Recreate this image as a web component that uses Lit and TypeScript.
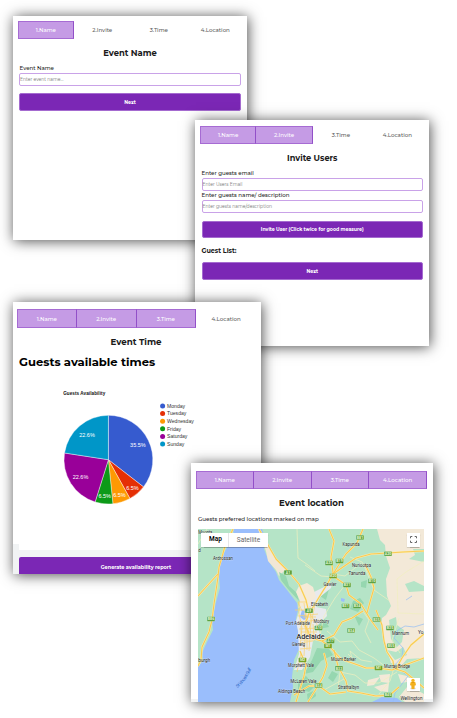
import { LitElement, html, css, svg } from "lit";
import { customElement, property } from "lit/decorators.js";
import { classMap } from "lit/directives/class-map.js";

const STEPS = ["1.Name", "2.Invite", "3.Time", "4.Location"];

@customElement("step-tabs")
class StepTabs extends LitElement {
  @property({ type: Number }) done = 1;

  static styles = css`
    :host { display: block; height: 100%; }
    .tabs { display: grid; grid-template-columns: repeat(4, 1fr); height: 100%; }
    .tab {
      display: flex; align-items: center; justify-content: center;
      font-size: 5.5px; font-weight: 500; color: #5c5c5c; box-sizing: border-box;
    }
    .on { background: #c59be5; color: #fff; border: 0.6px solid #a66bd3; border-right-color: #9250c8; }
    .on + .on { border-left: 0; }
  `;

  render() {
    return html`<div class="tabs">
      ${STEPS.map((s, i) => html`<div class=${classMap({ tab: true, on: i < this.done })}>${s}</div>`)}
    </div>`;
  }
}

const DAYS: [string, number, string, string][] = [
  ["Monday", 11, "#365bcf", "35.5%"],
  ["Tuesday", 2, "#e52f05", "6.5%"],
  ["Wednesday", 2, "#fe9902", "6.5%"],
  ["Friday", 2, "#0d9a18", "6.5%"],
  ["Saturday", 7, "#990099", "22.6%"],
  ["Sunday", 7, "#0096c8", "22.6%"],
];

@customElement("availability-chart")
class AvailabilityChart extends LitElement {
  static styles = css`
    :host { display: block; }
    svg { display: block; font-family: "Liberation Sans", Arial, sans-serif; }
    .title { font-size: 4.6px; font-weight: 700; fill: #111; }
    .pct { font-size: 5.5px; fill: #fff; text-anchor: middle; }
    .key { font-size: 5.1px; fill: #333; }
    .slice { stroke: #fff; stroke-width: 0.4; }
  `;

  render() {
    const total = DAYS.reduce((n, d) => n + d[1], 0);
    const cx = 89.4, cy = 81.7, r = 44.4;
    let at = 0;
    const point = (t: number, rad: number) => [
      cx + rad * Math.sin(t * 2 * Math.PI),
      cy - rad * Math.cos(t * 2 * Math.PI),
    ];
    const slices = DAYS.map(([, n, fill, label]) => {
      const from = at, to = at + n / total;
      at = to;
      const [x1, y1] = point(from, r), [x2, y2] = point(to, r);
      const [lx, ly] = point((from + to) / 2, n > 2 ? r * 0.74 : r * 0.83);
      return svg`<path class="slice" fill=${fill} d=${`M${cx} ${cy}L${x1} ${y1}A${r} ${r} 0 0 1 ${x2} ${y2}Z`}></path>
        <text class="pct" x=${lx} y=${ly + 1.9}>${label}</text>`;
    });
    return html`<svg width="210" height="172" viewBox="0 0 210 172">
      <text class="title" x="44.2" y="17.3" textLength="42">Guests Availability</text>
      ${slices}
      ${DAYS.map((d, i) => svg`<circle cx="143.6" cy=${28 + i * 7.6} r="2.5" fill=${d[2]}></circle>
        <text class="key" x="148" y=${29.8 + i * 7.6}>${d[0]}</text>`)}
    </svg>`;
  }
}

const PLACES: [number, number, string, number][] = [
  [198.3, 533.6, "Moonta", 14], [213, 560, "Ardrossan", 20], [198.3, 551.8, "d", 2.5], [198.3, 662.3, "burgh", 12],
  [342.5, 546.3, "Kapunda", 17], [352, 567, "Nuriootpa", 19], [348.5, 574.5, "Tanunda", 17],
  [323.5, 586.3, "Gawler", 13], [311, 605.5, "Elizabeth", 17], [285.8, 624.8, "Port Adelaide", 24],
  [313.5, 622.6, "Modbury", 15.5], [292, 646, "Glenelg", 13], [288, 667, "Morphett Vale", 26],
  [290.5, 683.3, "McLaren Vale", 26], [278, 692.5, "Aldinga Beach", 27], [331, 660.5, "Mount Barker", 25],
  [338, 689.3, "Strathalbyn", 21], [384, 667.5, "Murray Bridge", 26], [392, 634.8, "Mannum", 17],
  [418, 633.5, "Yo", 5.5], [400.5, 700, "Wellington", 22],
];

const SHIELDS: [number, number, string][] = [
  [288, 572.5, "A1"], [211, 619, "B86"], [360, 537.5, "B81"], [329, 563, "A32"], [339.5, 561, "B19"],
  [388, 553.7, "A20"], [333, 576, "M20"], [347, 585, "B31"], [372, 581, "B10"],
  [345.5, 606, "B31"], [357, 606, "B34"], [309, 610.7, "A9"], [376.5, 619.5, "B35"],
  [318.5, 628, "A10"], [351, 630.5, "B34"], [390, 628, "B35"], [330.5, 641, "A17"],
  [328, 646, "M1"], [391, 645.7, "B55"], [302.5, 660, "M2"], [339, 668.3, "B33"],
  [378.5, 668, "M1"], [318.5, 685.5, "B34"], [388, 695, "B45"],
];

@customElement("area-map")
class AreaMap extends LitElement {
  static styles = css`
    :host { display: block; position: relative; width: 226px; height: 173px; }
    svg { display: block; }
    .place { font: 5.6px Roboto, sans-serif; fill: #222; stroke: #fff; stroke-width: 0.5; paint-order: stroke; stroke-opacity: 0.6; }
    .city { font: 500 8px Roboto, sans-serif; fill: #202124; stroke: #fff; stroke-width: 0.7; paint-order: stroke; }
    .num { font: 700 3.6px Roboto, sans-serif; fill: #eaf7dc; text-anchor: middle; }
    .gulf { font: italic 4.6px Roboto, sans-serif; fill: #2c66c6; }
    .halo { fill: none; stroke: #fcedb0; stroke-width: 1.9; stroke-linejoin: round; }
    .main { fill: none; stroke: #f9ca52; stroke-width: 1.1; stroke-linejoin: round; }
    .minor { fill: none; stroke: #f0efbf; stroke-width: 0.7; stroke-linejoin: round; }
    .street { fill: none; stroke: #fad36f; stroke-width: 0.7; }
    .types {
      position: absolute; left: 3px; top: 4px; width: 67px; height: 13.5px; display: grid;
      grid-template-columns: 28px 39px; background: #fff; box-shadow: 0 0.5px 1px #0004;
      font: 6.5px Roboto, sans-serif; color: #666; align-items: center; text-align: center;
    }
    .types .picked { color: #000; font-weight: 600; border-right: 0.5px solid #e6e6e6; line-height: 13.5px; padding-left: 2px; }
    .tool {
      position: absolute; right: 4px; width: 13.5px; height: 13.5px; background: #fff;
      box-shadow: 0 0.5px 1px #0004; display: grid; place-items: center;
    }
    .full { top: 4px; }
    .peg { bottom: 11px; }
  `;

  render() {
    const main = [
      "M233 529L225 546L222 557L219 567L218 577L214 604L212 620L209 632L202 647L201 660L198 666",
      "M198 596L207 586L218 574",
      "M259 529L268 545L276 559L288 571L299 584L306 600L309 613",
      "M329 529L334 541L331 557L333 573L328 583L321 594L315 604L309 613L305 625",
      "M333 574L343 567L356 558L371 554L388 553L403 552L424 551",
      "M363 529L357 543L346 554L340 563L333 574",
      "M333 576L346 585L349 595L361 604L370 619L378 630",
      "M365 564L371 577L374 588L370 602L367 613",
      "M305 625L311 638L322 641L330 647L341 659L358 665L366 668L378 668L392 670L405 665L424 658",
      "M424 634L411 645L402 658L396 669L405 672L416 681L424 688",
      "M376 610L382 625L384 641L387 652L393 661L394 669",
      "M322 641L334 635L342 622L352 618L363 611",
      "M334 650L338 666L346 681L348 691L361 693L376 696L390 695L399 687",
      "M300 651L306 665L304 676L296 702",
      "M308 702L316 689L323 677L327 665L324 653",
      "M294 695L309 686L319 686L330 694L346 692",
    ];
    const minor = [
      "M297 529L298 558L308 565L315 571",
      "M198 544L207 529",
      "M424 561L406 572L397 579L398 613L424 614",
      "M305 565L321 576L333 577",
      "M345 585L335 598L324 616L320 635",
      "M350 557L362 562L365 568L374 590L390 601",
      "M348 654L352 658L350 651L361 660L372 662",
      "M333 574L345 576L361 563",
      "M327 631L340 642L352 641L359 650L374 658L390 670",
      "M338 689L340 672L355 675L365 683L379 683L397 672",
      "M379 694L390 681L393 671",
      "M306 681L324 690L344 679",
      "M362 610L369 620L365 631L371 643",
      "M399 618L392 640L400 653",
    ];
    return html`
      <svg width="226" height="173" viewBox="198 529 226 173">
        <rect x="198" y="529" width="226" height="173" fill="#b5e4c7"></rect>
        <path fill="#f3e9d8" d="M377 529L380 540L385 545L386 556L390 568L386 579L387 596L391 606L386 615L382 618L382 633L386 645L391 663L402 665L407 659L424 658V529Z"></path>
        <path fill="#b5e4c7" d="M424 549L413 549L415 555L409 559L424 562ZM405 584L414 581L424 586V591L409 592ZM389 620L396 617L397 625L404 630L402 642L396 648L391 639ZM387 650L396 652L403 647L407 655L395 660Z"></path>
        <path fill="#f3e9d8" d="M368 680L380 677L374 685L367 686ZM379 675L390 674L389 683L381 682ZM374 687L389 683L388 692L380 691ZM398 674L407 676L413 681L401 683ZM407 687L417 690L424 694V702H405L399 697Z"></path>
        <path fill="#9abefc" d="M233 529L234 535L229 544L224 553L220 562L219 577L220 588L216 602L212 621L213 630L207 642L202 653L203 660L198 667V702H290L293 687L292 677L294 660L300 647L298 630L296 619L298 610L297 603L287 590L279 580L276 572L269 562L264 549L266 541L262 529Z"></path>
        <path fill="#f2e7d6" d="M258 529L265 536L268 546L276 559L286 569L279 576L276 570L268 561L266 551L263 543Z"></path>
        <path fill="#96d7b0" d="M279 572L286 576L289 586L297 593L299 601L288 589L281 580ZM320 596L329 589L326 600ZM353 601L360 598L364 603L358 612L350 609ZM361 582L367 580L366 588L361 587ZM316 620L325 619L329 627L319 629ZM317 648L329 649L333 655L321 661L313 672L304 674L312 660ZM298 681L306 676L315 686L309 692L298 689ZM332 671L338 674L333 682L328 678ZM354 615L363 619L359 626ZM307 694L315 690L316 696L308 702Z"></path>
        <path fill="#e8eaed" d="M301 591L308 585L314 592L324 587L332 583L331 588L320 597L316 607L326 609L327 616L318 625L320 635L313 641L310 657L302 670L294 670L299 654L298 631L296 621L300 609Z"></path>
        <path fill="#f5ead7" d="M299 586L307 583L313 587L316 597L309 604L298 608L300 601L296 592Z"></path>
        <path fill="#9abefc" d="M341 598L345 599L344 602L341 601ZM302 610L306 611L304 614L308 617L304 620L300 617ZM372 702L382 697L397 698L402 702Z"></path>
        <path fill="none" stroke="#94bdf5" stroke-width="0.7" d="M424 624L414 627L405 626L398 630L394 638L403 648L402 657L394 666L408 676L402 684L395 693L393 702M412 596L406 600"></path>
        ${minor.map((d) => svg`<path class="minor" d=${d}></path>`)}
        ${main.map((d) => svg`<path class="halo" d=${d}></path>`)}
        ${main.map((d) => svg`<path class="main" d=${d}></path>`)}
        <path class="street" d="M299 603V614L302 628L300 646M304 603L306 620L304 656M310 606L311 622L309 651M315 604L312 619L307 636M298 616L318 614M299 622L319 620M299 629L318 628M300 636L315 634M300 643L313 641M300 649L311 648M306 608L318 626M300 620L312 638M302 611L298 602M297 672L301 653M295 610H306L306 616M298 602H306M301 626V639M307 622V650M313 624L314 638M303 617H316M301 632H317M301 640H315"></path>
        ${SHIELDS.map(([x, y, t]) => svg`<rect x=${x - 3.9} y=${y - 2.2} width="7.8" height="4.4" rx="0.6" fill=${t.startsWith("M") ? "#6c9d1b" : "#519c38"} stroke="#d7efbd" stroke-width="0.3"></rect>
          <text class="num" x=${x} y=${y + 1.3}>${t}</text>`)}
        ${PLACES.map(([x, y, t, w]) => svg`<text class="place" x=${x} y=${y} textLength=${w} lengthAdjust="spacingAndGlyphs">${t}</text>`)}
        <text class="city" x="296.5" y="638.5" textLength="28" lengthAdjust="spacingAndGlyphs">Adelaide</text>
        <path id="gulf" fill="none" d="M237.5 688Q247 680 252 667"></path>
        <text class="gulf"><textPath href="#gulf" textLength="24">St Vincent Gulf</textPath></text>
      </svg>
      <div class="types"><span class="picked">Map</span><span>Satellite</span></div>
      <div class="tool full">
        <svg width="7" height="7" viewBox="0 0 7 7"><path fill="none" stroke="#666" stroke-width="1" d="M.5 2.3V.5H2.3M4.7.5H6.5V2.3M6.5 4.7V6.5H4.7M2.3 6.5H.5V4.7"></path></svg>
      </div>
      <div class="tool peg">
        <svg width="8" height="12" viewBox="0 0 8 12"><ellipse cx="4" cy="10.6" rx="2.8" ry="1" fill="#d6d6d6"></ellipse><path fill="#f2b01e" d="M1.6 4.2Q4 2.9 6.4 4.2L7 7.3 5.7 7.6 5.4 11H2.6L2.3 7.6 1 7.3Z"></path><circle cx="4" cy="2.4" r="1.7" fill="#f5b722"></circle><path fill="#d88f0c" d="M2.8 4.1H5.2L4 5.1Z"></path></svg>
      </div>`;
  }
}

@customElement("app-root")
class AppRoot extends LitElement {
  static styles = css`
    :host { display: block; position: relative; width: 457px; height: 718px; overflow: hidden; background: #fff; font-family: Montserrat, Inter, sans-serif; color: #1b1b1b; }
    .card {
      position: absolute; display: flex; flex-direction: column; box-sizing: border-box;
      background: #fff; box-shadow: 1px 1px 13px 0 rgba(0, 0, 0, 0.7); overflow: hidden;
    }
    .name { left: 13px; top: 16px; width: 234px; height: 224px; padding: 5px 6px 0; }
    .invite { left: 195px; top: 120px; width: 234px; height: 226px; padding: 6px 6px 0 6.5px; }
    .time { left: 13px; top: 302px; width: 248px; height: 272px; padding: 7px 6px 0; background: linear-gradient(#fff 242px, #f1f3f4 242px); }
    .place { left: 191px; top: 463px; width: 242px; height: 239px; padding: 8px 9px 0 7px; background: linear-gradient(#fff 236px, #f1f3f4 236px); }
    step-tabs { flex: none; }
    .name step-tabs { height: 18px; margin: 0 -2.5px 0 -1.5px; }
    .invite step-tabs { height: 18px; margin: 0 -2.5px 0 -1.5px; }
    .time step-tabs { height: 19px; margin: 0 -1px 0 -2px; }
    .place step-tabs { height: 18px; margin: 0 -3px 0 -2px; }
    h1 { margin: 7.5px 0 0; height: 12px; flex: none; font-weight: 700; font-size: 8.4px; line-height: 12px; text-align: center; }
    h2 { margin: 6px 0 0; font-weight: 700; font-size: 11.6px; line-height: 16px; color: #000; flex: none; }
    label { display: block; font-size: 5.5px; font-weight: 500; line-height: 8px; height: 8px; flex: none; }
    .field { height: 13.5px; box-sizing: border-box; flex: none; border: 0.7px solid #c9a2e8; border-radius: 2px; font-size: 4.5px; color: #777; line-height: 12px; padding-left: 0; }
    .btn {
      height: 17.5px; box-sizing: border-box; flex: none; display: flex; align-items: center; justify-content: center;
      background: #7b27b5; border: 0.5px solid #a56bd0; border-radius: 2px; color: #fff; font-size: 4.7px; font-weight: 700;
    }
    .name label { margin: 5px 0 0 0.5px; }
    .name .field { margin-top: 1px; }
    .name .btn { margin-top: 7px; }
    .name .btn, .name .field { width: 222px; }
    .invite h1 { margin-top: 8px; font-size: 8.2px; }
    .invite .first { margin-top: 5px; }
    .invite .field { margin-top: 1px; height: 13px; }
    .invite .btn { margin-top: 7.5px; }
    .guests { font-size: 6.4px; font-weight: 700; line-height: 9px; margin-top: 9px; flex: none; }
    .invite .guests + .btn { margin-top: 6px; }
    .time h1 { margin-top: 8px; margin-left: -2px; font-size: 8.7px; }
    .chart { height: 172px; margin-top: 8px; flex: none; background: #fff; }
    .time .btn { margin-top: 7px; width: 234px; height: 19px; border: 0; border-radius: 2px; font-size: 4.95px; }
    .place h1 { margin-top: 8px; margin-left: 1px; font-size: 8.6px; }
    .note { font-size: 5.55px; line-height: 8px; font-weight: 500; height: 8px; margin: 6px 0 6px; flex: none; white-space: nowrap; }
  `;

  render() {
    return html`
      <section class="card name">
        <step-tabs .done=${1}></step-tabs>
        <h1>Event Name</h1>
        <label>Event Name</label>
        <div class="field">Enter event name...</div>
        <div class="btn">Next</div>
      </section>
      <section class="card invite">
        <step-tabs .done=${2}></step-tabs>
        <h1>Invite Users</h1>
        <label class="first">Enter guests email</label>
        <div class="field">Enter Users Email</div>
        <label>Enter guests name/ description</label>
        <div class="field">Enter guests name/description</div>
        <div class="btn">Invite User (Click twice for good measure)</div>
        <div class="guests">Guest List:</div>
        <div class="btn">Next</div>
      </section>
      <section class="card time">
        <step-tabs .done=${3}></step-tabs>
        <h1>Event Time</h1>
        <h2>Guests available times</h2>
        <div class="chart"><availability-chart></availability-chart></div>
        <div class="btn">Generate availability report</div>
      </section>
      <section class="card place">
        <step-tabs .done=${4}></step-tabs>
        <h1>Event location</h1>
        <div class="note">Guests preferred locations marked on map</div>
        <area-map></area-map>
      </section>
    `;
  }
}
